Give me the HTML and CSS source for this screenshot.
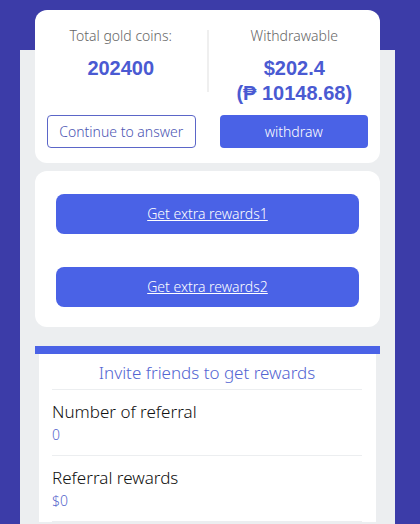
FILE: index.html
```html
<!DOCTYPE html>
<html lang="en">

<head>
    <meta charset="UTF-8">
    <meta name="viewport" content="width=device-width, initial-scale=1.0">
    <title>Rewards</title>
    <link rel="stylesheet" href="styles.css">
</head>

<body>
    <div class="panel">
        <!-- Resumen de monedas -->
        <div class="card summary">
            <div class="stats">
                <div class="stat">
                    <div class="stat-label">Total gold coins:</div>
                    <div class="stat-value">202400</div>
                </div>
                <div class="divider"></div>
                <div class="stat">
                    <div class="stat-label">Withdrawable</div>
                    <div class="stat-value">$202.4<br>(₱ 10148.68)</div>
                </div>
            </div>
            <div class="actions">
                <button class="btn-outline">Continue to answer</button>
                <button class="btn-fill">withdraw</button>
            </div>
        </div>

        <!-- Recompensas extra -->
        <div class="card extras">
            <a class="extra-btn" href="#">Get extra rewards1</a>
            <a class="extra-btn" href="#">Get extra rewards2</a>
        </div>

        <!-- Invitar amigos -->
        <div class="invite">
            <div class="invite-body">
                <div class="invite-title">Invite friends to get rewards</div>
                <div class="invite-row">
                    <div class="row-label">Number of referral</div>
                    <div class="row-value">0</div>
                </div>
                <div class="invite-row">
                    <div class="row-label">Referral rewards</div>
                    <div class="row-value">$0</div>
                </div>
            </div>
        </div>
    </div>
</body>

</html>
```

FILE: styles.css
```css
body {
    font-family: "Noto Sans", sans-serif;
    font-weight: 300;
    background-color: #3c3ca8;
    margin: 0;
    padding: 0;
    height: 524px;
    overflow: hidden;
}

.panel {
    display: flow-root;
    background-color: #eceef0;
    margin: 50px 25px 0 20px;
    padding: 0 15px;
    height: 474px;
}

.card {
    background-color: #fff;
    border-radius: 12px;
}

.summary {
    margin-top: -40px;
    padding: 16px 0 15px;
}

.stats {
    display: grid;
    grid-template-columns: 1fr 2px 1fr;
}

.stat {
    text-align: center;
}

.stat-label {
    font-size: 14px;
    line-height: 20px;
    color: #666;
}

.stat-value {
    font-family: "Liberation Sans", Arial, sans-serif;
    font-weight: bold;
    font-size: 20px;
    line-height: 25px;
    color: #4a5ad2;
    margin-top: 10px;
}

.divider {
    background-color: #efefef;
    margin-top: 4px;
    height: 62px;
}

.actions {
    display: grid;
    grid-template-columns: 1fr 1fr;
    column-gap: 24px;
    padding: 0 12px;
    margin-top: 9px;
}

.actions button {
    font-family: "Noto Sans", sans-serif;
    font-weight: 300;
    font-size: 14px;
    height: 33px;
    border-radius: 4px;
    cursor: pointer;
}

.btn-outline {
    background-color: #fff;
    border: 1px solid #5b66c8;
    color: #4b55b3;
}

.btn-fill {
    background-color: #4a62e6;
    border: none;
    color: #fff;
}

.extras {
    margin-top: 8px;
    padding: 23px 21px 20px;
    display: flex;
    flex-direction: column;
    gap: 33px;
}

.extra-btn {
    display: block;
    height: 40px;
    line-height: 40px;
    background-color: #4a62e6;
    border-radius: 8px;
    color: #fff;
    text-align: center;
    font-size: 14px;
}

.invite {
    margin-top: 19px;
    border-top: 8px solid #4a62e6;
}

.invite-body {
    background-color: #fff;
    margin: 0 4px;
    padding: 7px 14px 0 13px;
}

.invite-title {
    text-align: center;
    font-size: 17px;
    line-height: 24px;
    color: #5365d2;
    padding-bottom: 4px;
    border-bottom: 1px solid #eceef0;
}

.invite-row {
    padding: 10px 0 9px;
    border-bottom: 1px solid #eceef0;
}

.row-label {
    font-size: 17px;
    line-height: 24px;
    color: #111;
}

.row-value {
    font-size: 14px;
    line-height: 22px;
    color: #5565cc;
}
```
